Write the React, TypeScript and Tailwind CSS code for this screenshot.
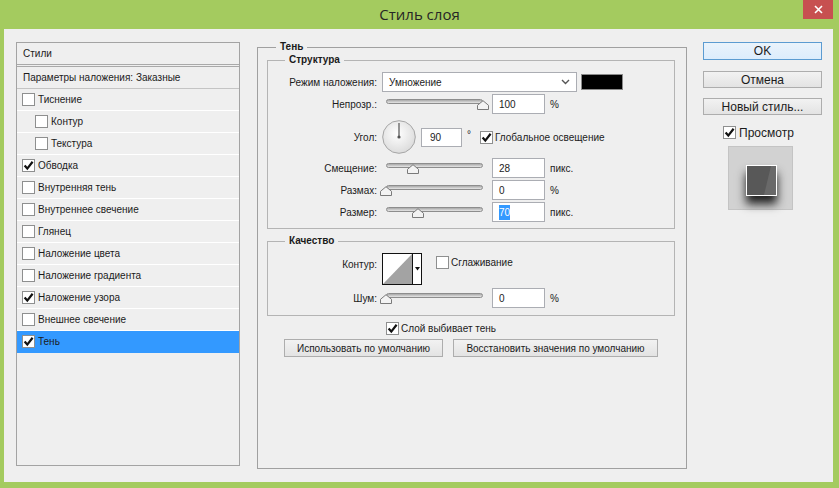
import React from "react";

const Check = ({ checked = false }: { checked?: boolean }) => (
  <span className="inline-flex w-[13px] h-[13px] shrink-0 items-center justify-center border border-[#8e8f8f] bg-white">
    {checked && (
      <svg width="11" height="11" viewBox="0 0 11 11">
        <path d="M1.6 5.6 L4.3 8.6 L9.6 1.8" fill="none" stroke="#111" strokeWidth="2.2" />
      </svg>
    )}
  </span>
);

// slider: track + house-shaped thumb, value 0..1
const Slider = ({ value }: { value: number }) => (
  <div className="relative w-[110px] h-[20px] shrink-0">
    <div className="absolute left-[4px] top-[5px] w-[97px] h-[5px] rounded-full border border-[#8d8d8d] bg-gradient-to-b from-[#a9a9a9] to-[#e6e6e6]" />
    <svg
      className="absolute top-[6px]"
      style={{ left: 4 + value * 97 - 6 }}
      width="12"
      height="10"
      viewBox="0 0 12 10"
    >
      <path d="M0.5 9.5 V5.3 L6 0.7 L11.5 5.3 V9.5 Z" fill="#f3f3f3" stroke="#7a7a7a" />
    </svg>
  </div>
);

const Field = ({ children }: { children: React.ReactNode }) => (
  <div className="w-[53px] h-[20px] shrink-0 border border-[#abadb3] bg-white flex items-center pl-[6px]">
    {children}
  </div>
);

const SliderRow = ({
  label,
  value,
  text,
  unit,
  className,
}: {
  label: string;
  value: number;
  text: React.ReactNode;
  unit: string;
  className: string;
}) => (
  <div className={`flex items-center h-[20px] ${className}`}>
    <div className="w-[109px] text-right">{label}</div>
    <div className="ml-[5px] flex items-center">
      <Slider value={value} />
      <Field>{text}</Field>
      <span className="ml-[5px]">{unit}</span>
    </div>
  </div>
);

const styles: [string, boolean, boolean, boolean][] = [
  ["Тиснение", false, false, false],
  ["Контур", false, true, false],
  ["Текстура", false, true, false],
  ["Обводка", true, false, false],
  ["Внутренняя тень", false, false, false],
  ["Внутреннее свечение", false, false, false],
  ["Глянец", false, false, false],
  ["Наложение цвета", false, false, false],
  ["Наложение градиента", false, false, false],
  ["Наложение узора", true, false, false],
  ["Внешнее свечение", false, false, false],
  ["Тень", true, false, true],
];

const SideButton = ({ children, primary, className }: { children: string; primary?: boolean; className: string }) => (
  <div
    className={`flex items-center justify-center border text-[12px] ${
      primary
        ? "border-[#5b9bd1] bg-gradient-to-b from-[#eaf3fb] to-[#dcecfc]"
        : "border-[#adadad] bg-gradient-to-b from-[#f2f2f2] to-[#e3e3e3]"
    } ${className}`}
  >
    {children}
  </div>
);

export default function App() {
  return (
    <div className="w-[839px] h-[488px] bg-[#a4cb5f] flex flex-col font-['Liberation_Sans',sans-serif] text-[10px] text-[#1b1b1b]">
      {/* title bar */}
      <div className="relative h-[29px] flex items-center justify-center">
        <span className="font-['Open_Sans',sans-serif] text-[15px] text-[#262626] -mt-[1px]">Стиль слоя</span>
        <div className="absolute right-[6px] top-0 w-[30px] h-[19px] bg-[#c75050] flex items-center justify-center">
          <svg width="9" height="9" viewBox="0 0 9 9">
            <path d="M1 1 L8 8 M8 1 L1 8" stroke="#fff" strokeWidth="1.6" />
          </svg>
        </div>
      </div>

      <div className="ml-[4px] mr-[6px] h-[453px] bg-[#efefef] flex pt-[13px] pl-[12px]">
        {/* styles list */}
        <div className="w-[224px] h-[424px] border border-[#a3a3a3] flex flex-col">
          <div className="h-[21px] flex items-center pl-[6px]">Стили</div>
          <div className="h-[3px] border-t border-b border-[#a9a9a9]" />
          <div className="h-[22px] flex items-center pl-[6px] border-b border-[#c4c4c4]">Параметры наложения: Заказные</div>
          {styles.map(([name, checked, indent, selected]) => (
            <div
              key={name}
              className={`h-[22px] flex items-center gap-[3px] border-b ${
                selected ? "bg-[#3399ff] border-[#3399ff]" : "border-white"
              } ${indent ? "pl-[18px]" : "pl-[5px]"}`}
            >
              <Check checked={checked} />
              <span>{name}</span>
            </div>
          ))}
        </div>

        {/* settings */}
        <fieldset className="ml-[17px] w-[430px] h-[427px] border border-[#a0a0a0] flex flex-col">
          <legend className="ml-[18px] px-[4px] leading-[10px] font-bold">Тень</legend>

          <fieldset className="mt-[3px] ml-[9px] mr-[11px] border border-[#b4b4b4] pb-[6px]">
            <legend className="ml-[17px] px-[4px] leading-[10px] font-bold">Структура</legend>

            <div className="mt-[7px] flex items-center h-[20px]">
              <div className="w-[109px] text-right">Режим наложения:</div>
              <div className="ml-[5px] w-[195px] h-[20px] border border-[#abadb3] bg-white flex items-center justify-between pl-[6px] pr-[6px]">
                <span>Умножение</span>
                <svg width="9" height="6" viewBox="0 0 9 6">
                  <path d="M1 1 L4.5 4.5 L8 1" fill="none" stroke="#555" strokeWidth="1.4" />
                </svg>
              </div>
              <div className="ml-[4px] w-[42px] h-[16px] border border-[#8a8a8a] bg-black" />
            </div>

            <SliderRow className="mt-[2px]" label="Непрозр.:" value={1} text="100" unit="%" />

            <div className="mt-[6px] flex items-center h-[34px]">
              <div className="w-[109px] text-right">Угол:</div>
              <svg className="ml-[5px] shrink-0" width="34" height="34" viewBox="0 0 34 34">
                <defs>
                  <radialGradient id="dial" cx="0.45" cy="0.4" r="0.6">
                    <stop offset="0" stopColor="#ffffff" />
                    <stop offset="1" stopColor="#dcdcdc" />
                  </radialGradient>
                </defs>
                <circle cx="17" cy="17" r="16.3" fill="url(#dial)" stroke="#a5a5a5" />
                <path d="M17 17 V3" stroke="#6a6a6a" strokeWidth="1.4" />
                <circle cx="17" cy="17" r="1.6" fill="#555" />
              </svg>
              <div className="ml-[5px] w-[41px] h-[19px] border border-[#abadb3] bg-white flex items-center pl-[8px]">90</div>
              <span className="ml-[5px] -mt-[6px]">°</span>
              <div className="ml-[9px] flex items-center gap-[2px]">
                <Check checked />
                <span>Глобальное освещение</span>
              </div>
            </div>

            <SliderRow className="mt-[4px]" label="Смещение:" value={0.28} text="28" unit="пикс." />
            <SliderRow className="mt-[2px]" label="Размах:" value={0} text="0" unit="%" />
            <SliderRow
              className="mt-[2px]"
              label="Размер:"
              value={0.33}
              text={<span className="bg-[#3399ff] text-white">70</span>}
              unit="пикс."
            />
          </fieldset>

          <fieldset className="mt-[7px] ml-[9px] mr-[11px] border border-[#b4b4b4] pb-[7px]">
            <legend className="ml-[17px] px-[4px] leading-[10px] font-bold">Качество</legend>

            <div className="mt-[7px] flex items-start h-[32px]">
              <div className="w-[109px] text-right mt-[4px]">Контур:</div>
              <div className="ml-[5px] w-[40px] h-[32px] border border-[#111] bg-white flex">
                <svg width="29" height="30" viewBox="0 0 29 30" className="shrink-0">
                  <polygon points="0,30 29,0 29,30" fill="#a3a3a3" />
                </svg>
                <div className="flex-1 border-l border-[#111] flex items-center justify-center">
                  <svg width="5" height="4" viewBox="0 0 5 4">
                    <polygon points="0,0 5,0 2.5,3.5" fill="#111" />
                  </svg>
                </div>
              </div>
              <div className="ml-[14px] mt-[2px] flex items-center gap-[2px]">
                <Check />
                <span>Сглаживание</span>
              </div>
            </div>

            <SliderRow className="mt-[3px]" label="Шум:" value={0} text="0" unit="%" />
          </fieldset>

          <div className="mt-[6px] pl-[128px] flex items-center gap-[2px] h-[13px]">
            <Check checked />
            <span>Слой выбивает тень</span>
          </div>

          <div className="mt-[4px] pl-[26px] flex gap-[10px]">
            <div className="w-[159px] h-[18px] border border-[#adadad] bg-gradient-to-b from-[#f2f2f2] to-[#e3e3e3] flex items-center justify-center">
              Использовать по умолчанию
            </div>
            <div className="w-[205px] h-[18px] border border-[#adadad] bg-gradient-to-b from-[#f2f2f2] to-[#e3e3e3] flex items-center justify-center">
              Восстановить значения по умолчанию
            </div>
          </div>
        </fieldset>

        {/* buttons + preview */}
        <div className="ml-[16px] w-[119px] flex flex-col">
          <SideButton primary className="h-[18px]">OK</SideButton>
          <SideButton className="mt-[11px] h-[17px]">Отмена</SideButton>
          <SideButton className="mt-[10px] h-[17px]">Новый стиль...</SideButton>
          <div className="mt-[11px] ml-[20px] h-[13px] flex items-center gap-[3px] text-[12px]">
            <Check checked />
            <span>Просмотр</span>
          </div>
          <div className="mt-[7px] ml-[25px] w-[65px] h-[64px] border border-[#c4c4c4] bg-[#d2d2d2] pt-[18px] pl-[17px]">
            <div className="w-[31px] h-[31px] border border-white shadow-[0_8px_9px_rgba(0,0,0,0.85)]">
              <svg width="29" height="29" viewBox="0 0 29 29" className="block">
                <rect width="29" height="29" fill="#585858" />
                <polygon points="24,0 29,0 29,29 17,29" fill="#696969" />
              </svg>
            </div>
          </div>
        </div>
      </div>
    </div>
  );
}
